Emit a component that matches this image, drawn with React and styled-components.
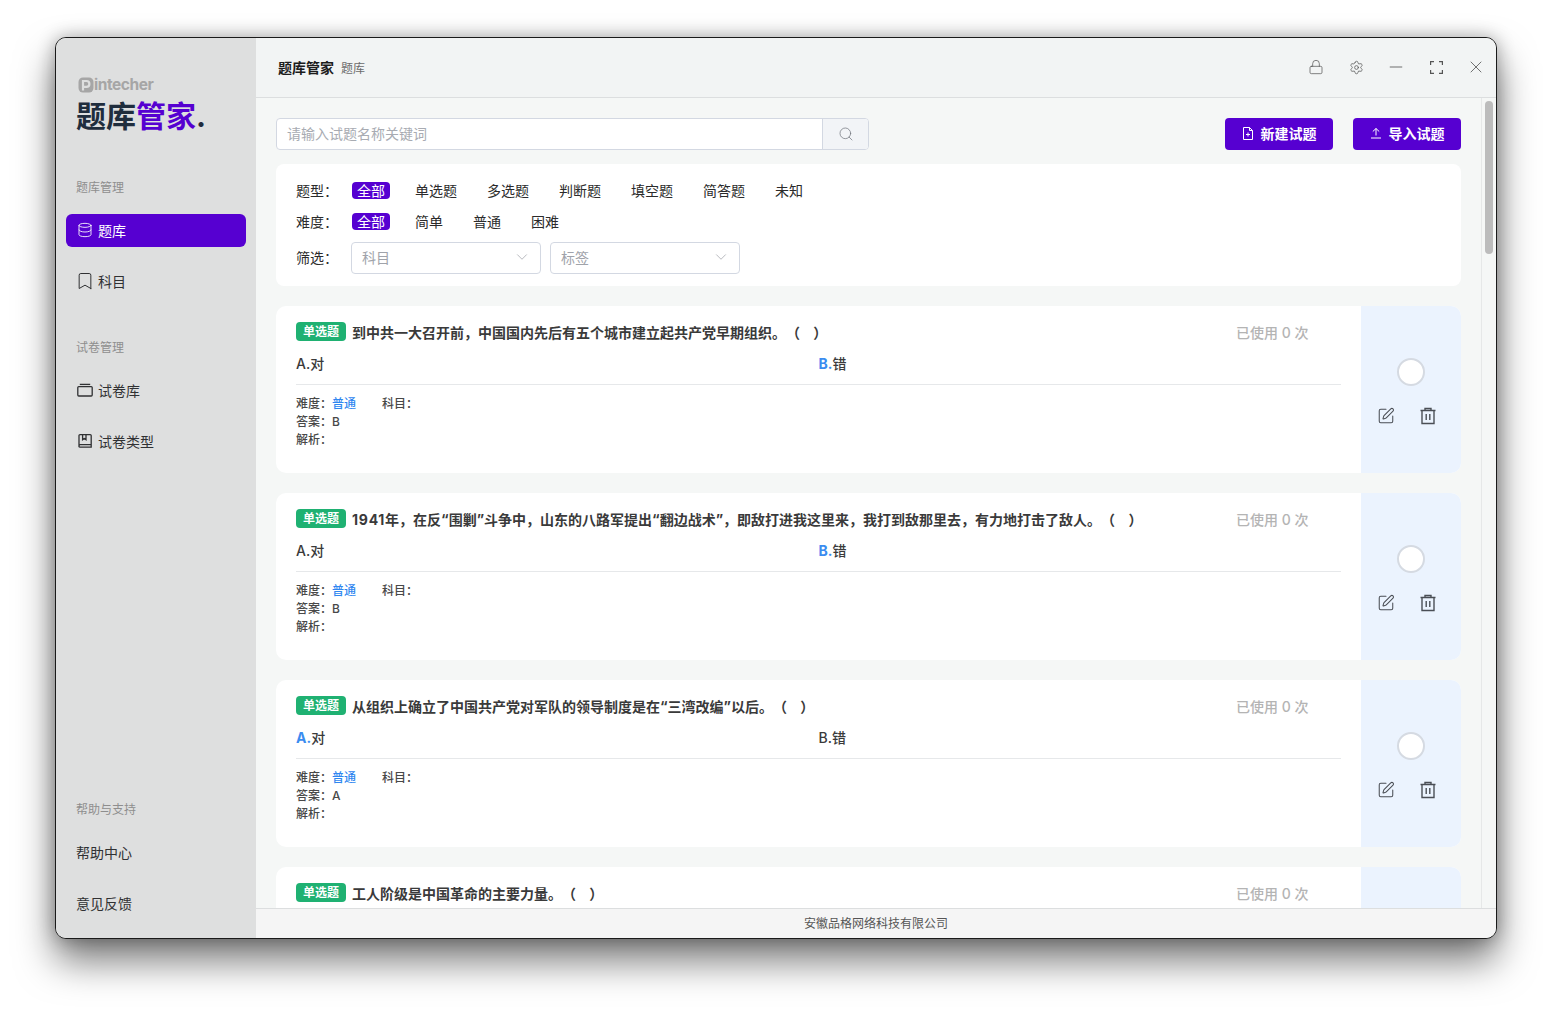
import React from "react";
import styled, { createGlobalStyle } from "styled-components";
import { Database, Bookmark, Lock, Settings, Minus, X, Search, ChevronDown, SquarePen } from "lucide-react";

const Global = createGlobalStyle`
  html, body { margin: 0; padding: 0; background: #fff; }
  body { font-family: Inter, "Noto Sans CJK SC", sans-serif; }
  * { box-sizing: border-box; }
`;
const Page = styled.div`
  width: 1552px; height: 1012px; padding: 37px 55px 73px; overflow: hidden; background: #fff;
`;
const Window = styled.div`
  width: 1442px; height: 902px; display: flex; border: 1px solid #1a1a1a; border-radius: 11px; overflow: hidden;
  box-shadow: 0 22px 38px rgba(0,0,0,.52), 0 0 18px rgba(0,0,0,.3); background: #f5f7f6;
`;
const Sidebar = styled.aside`
  width: 200px; flex: none; background: #dedfdf; display: flex; flex-direction: column; padding: 38px 10px 0;
`;
const Brand = styled.div`
  padding: 0 0 0 11px; height: 67px; margin-bottom: 36px;
`;
const Maker = styled.div`
  display: flex; align-items: center; height: 18px; color: #a6a6a6; font-size: 15.500px; font-weight: 700; letter-spacing: -.45px; line-height: 18px;
`;
const BrandName = styled.div`
  font-size: 30px; font-weight: 700; line-height: 38px; margin: 3px 0 0 -1px; color: #1f2d3d; white-space: nowrap;
  span { color: #5600d1; }
`;
const SectionLabel = styled.div`
  font-size: 12px; line-height: 18px; color: #8e8e8e; padding-left: 10px; margin-bottom: 17px;
`;
const NavGroup = styled.div`
  margin-top: ${p => p.$top || 0}px;
  ${p => p.$bottom ? "margin-top: auto; padding-bottom: 18px;" : ""}
`;
const NavItem = styled.div`
  height: 33px; border-radius: 6px; display: flex; align-items: center; gap: 5px; padding: 0 0 1px ${p => p.$plain ? 10 : 11}px; font-size: 14px;
  margin-bottom: 18px; background: ${p => p.$active ? "#5600d1" : "transparent"}; color: ${p => p.$active ? "#fff" : "#303133"};
  &:last-child { margin-bottom: 0; }
  svg { flex: none; }
`;
const Main = styled.main`
  flex: 1; min-width: 0; display: flex; flex-direction: column;
`;
const Header = styled.header`
  height: 60px; flex: none; background: #f2f4f4; border-bottom: 1px solid #dcdedf; display: flex; align-items: center; padding: 0 0 1px 22px;
`;
const AppTitle = styled.div`
  font-size: 14px; font-weight: 700; color: #1c1c1c;
`;
const PageTitle = styled.div`
  font-size: 12px; color: #6b6b6b; margin-left: 7px;
`;
const WinControls = styled.div`
  margin-left: auto; display: flex; align-items: center; color: #555;
`;
const WinControl = styled.div`
  width: 40px; height: 20px; display: flex; align-items: center; justify-content: center;
`;
const ContentArea = styled.div`
  flex: 1; min-height: 0; display: flex;
`;
const Scroller = styled.div`
  flex: 1; min-width: 0; overflow-y: auto; scrollbar-width: none; padding: 20px;
`;
const ScrollRail = styled.div`
  width: 15px; flex: none; border-left: 1px solid #e6e8e8; padding: 3px 3px 0 3px; background: #f5f7f6;
`;
const ScrollThumb = styled.div`
  height: 153px; background: #bcbcbc; border-radius: 4px;
`;
const Toolbar = styled.div`
  display: flex; align-items: center; height: 32px; margin-bottom: 14px;
`;
const SearchBox = styled.div`
  width: 593px; height: 32px; display: flex; border: 1px solid #d3d8e2; border-radius: 4px; background: #fff; overflow: hidden;
`;
const SearchText = styled.div`
  flex: 1; font-size: 14px; line-height: 29px; color: #a8abb2; padding-left: 10px;
`;
const SearchBtn = styled.div`
  width: 46px; background: #f2f4f7; border-left: 1px solid #d3d8e2; display: flex; align-items: center; justify-content: center; color: #70757d;
`;
const PrimaryBtn = styled.div`
  width: 108px; height: 32px; background: #5600d1; color: #fff; border-radius: 4px; display: flex; align-items: center; justify-content: center; gap: 7px; padding-bottom: 2px;
  font-size: 14px; font-weight: 700; margin-left: ${p => p.$first ? "auto" : "20px"};
`;
const FilterCard = styled.div`
  background: #fff; border-radius: 8px; height: 122px; padding: 16px 20px 0; margin-bottom: 20px;
`;
const FilterRow = styled.div`
  display: flex; align-items: center; height: 20px; margin-bottom: 11px; font-size: 14px; color: #2b2b2b;
`;
const FilterLabel = styled.div`
  width: 56px; flex: none; margin-bottom: ${p => p.$lift ? 2 : 0}px;
`;
const Chip = styled.div`
  height: 17px; line-height: 17px; padding: 0 ${p => p.$active ? "5px" : "0"}; margin-right: ${p => p.$gap}px; border-radius: 4px;
  background: ${p => p.$active ? "#5600d1" : "transparent"}; color: ${p => p.$active ? "#fff" : "#2b2b2b"}; white-space: nowrap;
`;
const SelectRow = styled.div`
  display: flex; align-items: center; height: 32px; font-size: 14px; color: #2b2b2b;
`;
const Select = styled.div`
  width: 190px; height: 32px; border: 1px solid #d3d8e2; border-radius: 4px; display: flex; align-items: center; justify-content: space-between;
  padding: 0 9px 2px 10px; color: #a0a3aa; margin-right: 9px; margin-left: ${p => p.$first ? "-1px" : "0"};
`;
const Card = styled.article`
  height: 167px; display: flex; background: #fff; border-radius: 10px; overflow: hidden; margin-bottom: 20px;
`;
const CardBody = styled.div`
  flex: 1; min-width: 0; padding: 15px 20px 0;
`;
const TitleRow = styled.div`
  display: flex; align-items: center; height: 21px; font-size: 14px; font-weight: 700; color: #3a3a3a; white-space: pre;
  text-spacing-trim: space-all;
`;
const Digits = styled.span`
  letter-spacing: .75px;
`;
const TypeTag = styled.span`
  width: 50px; height: 19px; flex: none; background: #1fb172; color: #fff; border-radius: 4px; font-size: 12px; line-height: 19px; text-align: center; margin: 0 6px 0 0;
`;
const Used = styled.span`
  margin-left: auto; width: 105px; color: #b4b4b4; font-size: 14px; font-weight: 500;
`;
const Options = styled.div`
  display: grid; grid-template-columns: 1fr 1fr; height: 43px; line-height: 20px; padding-top: 12px; font-size: 14px; font-weight: 500; color: #3a3a3a; border-bottom: 1px solid #e6e8ea; margin-bottom: 10px;
`;
const OptKey = styled.span`
  color: ${p => p.$right ? "#3b8cf0" : "inherit"}; font-weight: ${p => p.$right ? 700 : 500};
`;
const Meta = styled.div`
  display: flex; font-size: 12px; line-height: 18px; color: #484848; font-weight: 500;
`;
const MetaKey = styled.span`
  width: 36px; flex: none;
`;
const Level = styled.span`
  color: #2f86f0; width: 50px; flex: none;
`;
const Side = styled.div`
  width: 100px; flex: none; background: #ebf3fe; display: flex; flex-direction: column; align-items: center; padding-top: 52px; color: #4a4e55;
`;
const Radio = styled.div`
  width: 28px; height: 28px; border-radius: 50%; background: #fff; border: 2px solid #d5dae2; margin-bottom: 20px;
`;
const SideIcons = styled.div`
  display: flex; gap: 24px; width: 60px; height: 20px; align-items: center; margin-right: 8px;
`;
const Footer = styled.footer`
  height: 30px; flex: none; background: #f5f5f5; border-top: 1px solid #dcdedf; font-size: 12px; color: #555; display: flex; align-items: center; justify-content: center; padding-bottom: 2px;
`;

const PLogo = () => (
  <svg width="16" height="16" viewBox="0 0 16 16" style={{ marginLeft: 1 }}>
    <rect x=".5" y=".5" width="15" height="15" rx="4.500" fill="#a6a6a6" />
    <path d="M5 13.500V4h3.500a2.900 2.900 0 0 1 0 5.800H5" fill="none" stroke="#dedfdf" strokeWidth="2.200" />
  </svg>
);
const ArchiveIcon = () => (
  <svg width="16" height="16" viewBox="0 0 16 16" fill="none" stroke="#303133" strokeWidth="1.300">
    <rect x=".8" y="4.600" width="14.400" height="9.400" rx="1" />
    <path d="M2.800 2.400h10.400" />
  </svg>
);
const BookIcon = () => (
  <svg width="16" height="16" viewBox="0 0 16 16" fill="none" stroke="#303133" strokeWidth="1.300">
    <path d="M2 14V2.600a1 1 0 0 1 1-1h10.200a1 1 0 0 1 1 1V14.200H3.200A1.300 1.300 0 0 1 2 12.900a1.300 1.300 0 0 1 1.200-1.200h11" />
    <path d="M5.600 1.600v5.200L7.300 5.500 9 6.800V1.600" />
  </svg>
);
const CornersIcon = () => (
  <svg width="13" height="13" viewBox="0 0 13 13" fill="none" stroke="currentColor" strokeWidth="1.200">
    <path d="M.6 4V.6H4M9 .6h3.400V4M12.400 9v3.400H9M4 12.400H.6V9" />
  </svg>
);
const FilePlusIcon = () => (
  <svg width="12" height="13" viewBox="0 0 12 13" fill="none" stroke="#fff" strokeWidth="1">
    <path d="M1.500.5h6l3 3v9h-9zM7.500.5v3h3M6 5.500v4M4 7.500h4" />
  </svg>
);
const UploadIcon = () => (
  <svg width="12" height="12" viewBox="0 0 12 12" fill="none" stroke="#fff" strokeWidth="1">
    <path d="M1 11h10M6 8.500V1.500M2.800 4.500 6 1.500l3.200 3" />
  </svg>
);
const TrashIcon = () => (
  <svg width="18" height="18" viewBox="0 0 18 18" fill="none" stroke="currentColor" strokeWidth="1.400">
    <path d="M1.500 3.500h15M6 3.500V1.500h6v2M3 3.500v13h12v-13M7.200 7v6M10.800 7v6" />
  </svg>
);

const types = ["全部", "单选题", "多选题", "判断题", "填空题", "简答题", "未知"];
const levels = ["全部", "简单", "普通", "困难"];
const questions = [
  { id: 1, q: "到中共一大召开前，中国国内先后有五个城市建立起共产党早期组织。（    ）", a: "B" },
  { id: 2, year: "1941", q: "年，在反“围剿”斗争中，山东的八路军提出“翻边战术”，即敌打进我这里来，我打到敌那里去，有力地打击了敌人。（    ）", a: "B" },
  { id: 3, q: "从组织上确立了中国共产党对军队的领导制度是在“三湾改编”以后。（    ）", a: "A" },
  { id: 4, q: "工人阶级是中国革命的主要力量。（    ）", a: "A" },
];

export default function App() {
  return (
    <Page>
      <Global />
      <Window>
        <Sidebar>
          <Brand>
            <Maker><PLogo />intecher</Maker>
            <BrandName>题库<span>管家</span>.</BrandName>
          </Brand>
          <NavGroup>
            <SectionLabel>题库管理</SectionLabel>
            <NavItem $active><Database size={16} strokeWidth={1.3} />题库</NavItem>
            <NavItem><Bookmark size={20} strokeWidth={1.2} style={{ margin: "0 -2px" }} />科目</NavItem>
          </NavGroup>
          <NavGroup $top={41}>
            <SectionLabel>试卷管理</SectionLabel>
            <NavItem><ArchiveIcon />试卷库</NavItem>
            <NavItem><BookIcon />试卷类型</NavItem>
          </NavGroup>
          <NavGroup $bottom>
            <SectionLabel>帮助与支持</SectionLabel>
            <NavItem $plain>帮助中心</NavItem>
            <NavItem $plain>意见反馈</NavItem>
          </NavGroup>
        </Sidebar>
        <Main>
          <Header>
            <AppTitle>题库管家</AppTitle>
            <PageTitle>题库</PageTitle>
            <WinControls>
              <WinControl><Lock size={16} strokeWidth={1.1} /></WinControl>
              <WinControl><Settings size={15} strokeWidth={1.2} /></WinControl>
              <WinControl><Minus size={20} strokeWidth={1} /></WinControl>
              <WinControl><CornersIcon /></WinControl>
              <WinControl><X size={20} strokeWidth={1} /></WinControl>
            </WinControls>
          </Header>
          <ContentArea>
            <Scroller>
              <Toolbar>
                <SearchBox>
                  <SearchText>请输入试题名称关键词</SearchText>
                  <SearchBtn><Search size={16} strokeWidth={1.1} /></SearchBtn>
                </SearchBox>
                <PrimaryBtn $first><FilePlusIcon />新建试题</PrimaryBtn>
                <PrimaryBtn><UploadIcon />导入试题</PrimaryBtn>
              </Toolbar>
              <FilterCard>
                <FilterRow>
                  <FilterLabel>题型：</FilterLabel>
                  {types.map((t, i) => <Chip key={t} $active={i === 0} $gap={i === 0 ? 25 : 30}>{t}</Chip>)}
                </FilterRow>
                <FilterRow>
                  <FilterLabel>难度：</FilterLabel>
                  {levels.map((t, i) => <Chip key={t} $active={i === 0} $gap={i === 0 ? 25 : 30}>{t}</Chip>)}
                </FilterRow>
                <SelectRow>
                  <FilterLabel $lift>筛选：</FilterLabel>
                  <Select $first>科目<ChevronDown size={18} strokeWidth={1} /></Select>
                  <Select>标签<ChevronDown size={18} strokeWidth={1} /></Select>
                </SelectRow>
              </FilterCard>
              {questions.map(item => (
                <Card key={item.id}>
                  <CardBody>
                    <TitleRow>
                      <TypeTag>单选题</TypeTag>
                      <span>{item.year && <Digits>{item.year}</Digits>}{item.q}</span>
                      <Used>已使用 0 次</Used>
                    </TitleRow>
                    <Options>
                      <div><OptKey $right={item.a === "A"}>A.</OptKey>对</div>
                      <div><OptKey $right={item.a === "B"}>B.</OptKey>错</div>
                    </Options>
                    <Meta><MetaKey>难度：</MetaKey><Level>普通</Level><span>科目：</span></Meta>
                    <Meta><MetaKey>答案：</MetaKey>{item.a}</Meta>
                    <Meta><MetaKey>解析：</MetaKey></Meta>
                  </CardBody>
                  <Side>
                    <Radio />
                    <SideIcons>
                      <SquarePen size={18} strokeWidth={1.4} />
                      <TrashIcon />
                    </SideIcons>
                  </Side>
                </Card>
              ))}
            </Scroller>
            <ScrollRail><ScrollThumb /></ScrollRail>
          </ContentArea>
          <Footer>安徽品格网络科技有限公司</Footer>
        </Main>
      </Window>
    </Page>
  );
}
